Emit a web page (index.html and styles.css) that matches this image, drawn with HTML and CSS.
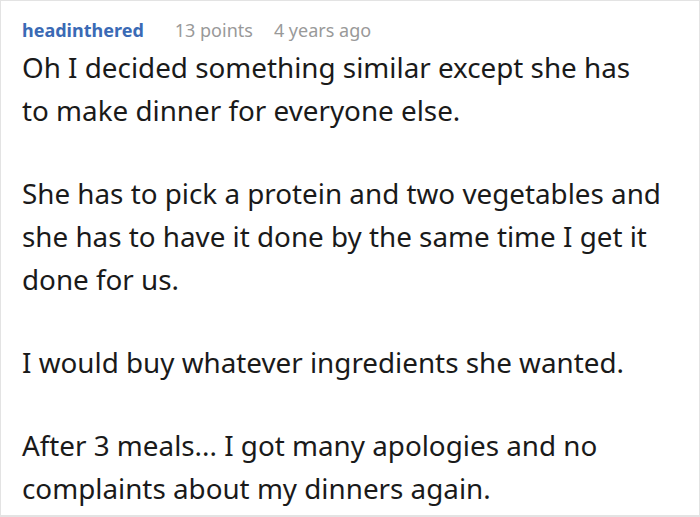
FILE: index.html
```html
<!DOCTYPE html>
<html>
<head>
<meta charset="utf-8">
<link rel="stylesheet" href="styles.css">
</head>
<body>
<div class="comment">
  <div class="meta">
    <span class="user">headinthered</span>
    <span class="points">13 points</span>
    <span class="time">4 years ago</span>
  </div>
  <div class="body">
    <p>Oh I decided something similar except she has to&nbsp;make dinner for everyone else.</p>
    <p>She has to pick a protein and two vegetables and she has to have it done by the same time I get it done for us.</p>
    <p>I would buy whatever ingredients she wanted.</p>
    <p>After 3 meals... I got many apologies and no complaints about my dinners again.</p>
  </div>
</div>
</body>
</html>
```
FILE: styles.css
```css
html, body {
  margin: 0;
  padding: 0;
  background: #fff;
}
.comment {
  box-sizing: border-box;
  width: 700px;
  height: 517px;
  border: 1px solid #e3e3e3;
  border-bottom-width: 2px;
  padding: 17px 20px 0 21px;
  font-family: "Noto Sans", sans-serif;
  overflow: hidden;
}
.meta {
  display: flex;
  gap: 21px;
  font-size: 18px;
  line-height: 24px;
  color: #999;
}
.user {
  color: #3a6ab5;
  font-weight: 700;
  margin-right: 10px;
}
.body {
  font-size: 27.8px;
  line-height: 43px;
  color: #1a1a1a;
  margin-top: 4px;
}
.body p {
  margin: 0 0 40px 0;
}
```
